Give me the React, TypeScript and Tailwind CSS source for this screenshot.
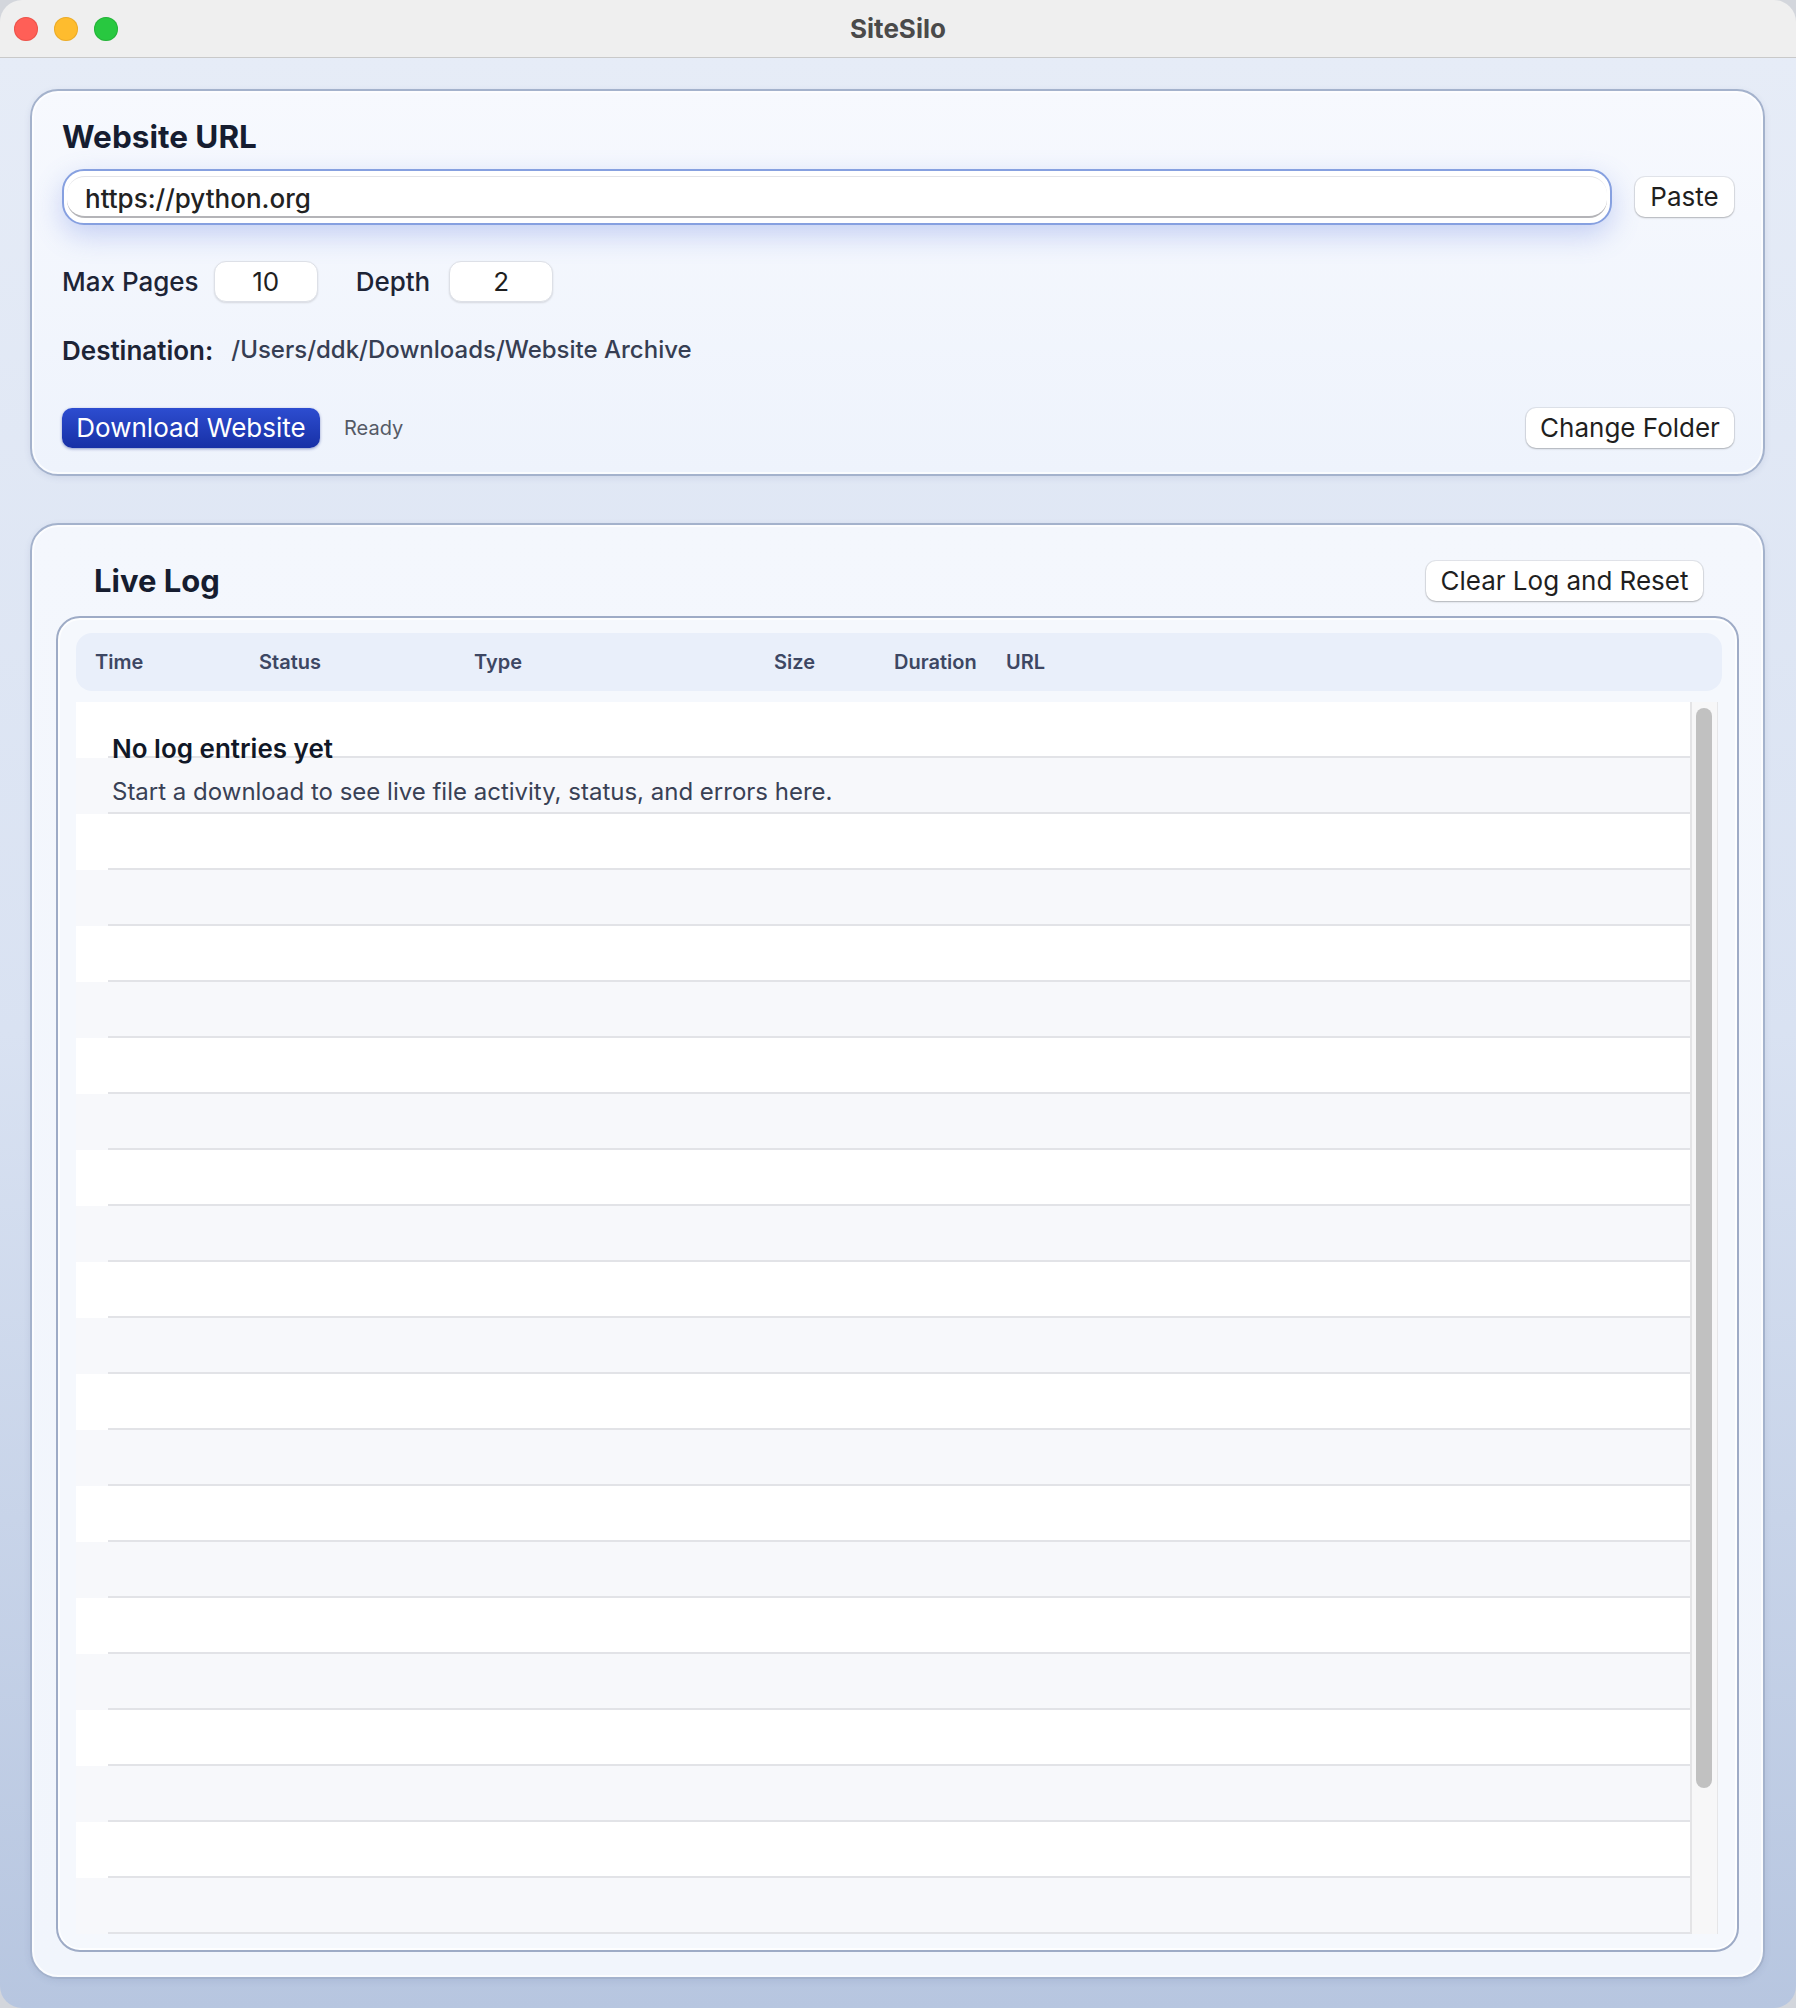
import React from "react";

const font = { fontFamily: "Inter, 'Noto Sans', sans-serif" };

function TrafficLights() {
  return (
    <div className="flex items-center gap-[16px] pl-[14px]">
      <span className="block h-[24px] w-[24px] rounded-full bg-[#ff5f57] shadow-[inset_0_0_0_1px_rgba(200,60,50,0.35)]" />
      <span className="block h-[24px] w-[24px] rounded-full bg-[#febc2e] shadow-[inset_0_0_0_1px_rgba(200,140,30,0.35)]" />
      <span className="block h-[24px] w-[24px] rounded-full bg-[#28c840] shadow-[inset_0_0_0_1px_rgba(30,140,40,0.35)]" />
    </div>
  );
}

function PushButton({ label, width }: { label: string; width: string }) {
  return (
    <button
      className={`${width} h-[40px] shrink-0 rounded-[10px] bg-white text-[26px] leading-[32px] text-[#1f1f1f] shadow-[0_0_0_1px_rgba(0,0,0,0.07),0_1px_2px_rgba(0,0,0,0.22)]`}
    >
      {label}
    </button>
  );
}

function NumberField({ value }: { value: string }) {
  return (
    <div className="flex h-[41px] w-[104px] items-center justify-center rounded-[12px] border border-[#dde0e7] bg-white text-[26px] text-[#1f1f1f] shadow-[0_1px_2px_rgba(0,0,0,0.12)]">
      {value}
    </div>
  );
}

function SettingsPanel() {
  return (
    <section className="flex h-[387px] shrink-0 flex-col rounded-[28px] border-2 border-[#a4b2cc] bg-gradient-to-b from-[#f7f9fe] to-[#eef3fc] pb-[25px] pl-[30px] pr-[29px] pt-[28px] shadow-[inset_0_0_0_2px_rgba(255,255,255,0.7),0_2px_6px_rgba(80,100,150,0.12)]">
      <h2 className="text-[31.5px] font-bold leading-[36px] text-[#161d30]">Website URL</h2>

      <div className="mt-[14px] flex items-center gap-[23px]">
        <div className="h-[56px] flex-1 rounded-[22px] border-2 border-[#86a0e0] bg-white pl-[3px] pr-[3px] pt-[5px] shadow-[0_10px_28px_rgba(95,125,225,0.32)]">
          <div className="flex h-[42px] items-center rounded-[18px] border-b-2 border-t border-b-[#b4b4b8] border-t-[#e4e4e8] pl-[18px] pt-[3px] text-[26px] font-medium text-[#222222]">
            https://python.org
          </div>
        </div>
        <PushButton label="Paste" width="w-[99px]" />
      </div>

      <div className="mt-[36px] flex h-[41px] items-center">
        <span className="text-[26px] font-medium text-[#1d2436]">Max Pages</span>
        <div className="ml-[15px]">
          <NumberField value="10" />
        </div>
        <span className="ml-[38px] text-[26px] font-medium text-[#1d2436]">Depth</span>
        <div className="ml-[19px]">
          <NumberField value="2" />
        </div>
      </div>

      <div className="mt-[32px] flex h-[32px] items-center">
        <span className="text-[26px] font-semibold text-[#1d2436]">Destination:</span>
        <span className="ml-[18px] text-[24px] font-medium text-[#363e53]">
          /Users/ddk/Downloads/Website Archive
        </span>
      </div>

      <div className="mt-[42px] flex h-[40px] items-center">
        <button className="h-[40px] w-[258px] rounded-[10px] bg-gradient-to-b from-[#2d4dd0] to-[#1830a6] text-[26px] leading-[32px] text-white shadow-[0_1px_3px_rgba(20,40,140,0.45)]">
          Download Website
        </button>
        <span className="ml-[24px] text-[20px] text-[#555a66]">Ready</span>
        <div className="flex-1" />
        <PushButton label="Change Folder" width="w-[208px]" />
      </div>
    </section>
  );
}

const columns = ["Time", "Status", "Type", "Size", "Duration", "URL"];
const rows = Array.from({ length: 22 }, (_, i) => i);

function LogTable() {
  return (
    <div className="flex flex-1 flex-col rounded-[24px] border-2 border-[#9eabc6] bg-[#f5f8fd] pl-[18px] pr-[15px] pt-[15px] shadow-[inset_0_0_0_2px_rgba(255,255,255,0.8)]">
      <div className="grid h-[58px] shrink-0 grid-cols-[164px_215px_300px_120px_112px_1fr] items-center rounded-[16px] bg-[#e9effa] pl-[19px] text-[20px] font-semibold text-[#3d4763]">
        {columns.map((c) => (
          <span key={c}>{c}</span>
        ))}
      </div>

      <div className="relative mr-[4px] mt-[11px] flex">
        <div className="flex-1">
          {rows.map((i) => (
            <div key={i} className={`h-[56px] ${i % 2 === 0 ? "bg-white" : "bg-[#f7f8fb]"}`}>
              <div className="ml-[32px] h-full border-b-2 border-[#e2e3e7]" />
            </div>
          ))}
        </div>
        <div className="w-[2px] bg-[#e4e4e6]" />
        <div className="w-[26px] border-r border-[#e6e6e8] bg-[#f7f7f8] pl-[4px] pt-[6px]">
          <div className="h-[1080px] w-[16px] rounded-full bg-[#c1c1c1]" />
        </div>

        <div className="absolute left-[36px] top-[31px]">
          <p className="text-[26px] font-semibold leading-[32px] text-[#111827]">No log entries yet</p>
          <p className="mt-[11px] text-[24px] leading-[32px] text-[#394155]">
            Start a download to see live file activity, status, and errors here.
          </p>
        </div>
      </div>
    </div>
  );
}

function LogPanel() {
  return (
    <section className="flex h-[1456px] shrink-0 flex-col rounded-[28px] border-2 border-[#a4b2cc] bg-gradient-to-b from-[#f4f7fd] to-[#f1f5fc] px-[24px] pb-[25px] pt-[36px] shadow-[inset_0_0_0_2px_rgba(255,255,255,0.7),0_2px_6px_rgba(80,100,150,0.12)]">
      <div className="flex h-[40px] items-center pl-[38px] pr-[36px]">
        <h2 className="text-[31px] font-bold leading-[36px] text-[#161d30]">Live Log</h2>
        <div className="flex-1" />
        <PushButton label="Clear Log and Reset" width="w-[277px]" />
      </div>
      <div className="mt-[15px] flex flex-1 flex-col">
        <LogTable />
      </div>
    </section>
  );
}

export default function App() {
  return (
    <div className="h-[2008px] w-[1796px] overflow-hidden bg-[#d3d6dc]" style={font}>
      <div className="flex h-full flex-col overflow-hidden rounded-[22px]">
        <header className="grid h-[58px] shrink-0 grid-cols-[1fr_auto_1fr] items-center border-b border-[#c9c9c9] bg-[#efefef]">
          <TrafficLights />
          <h1 className="text-[26px] font-bold text-[#4a4a4a]">SiteSilo</h1>
          <div />
        </header>
        <main className="flex flex-1 flex-col gap-[47px] bg-gradient-to-b from-[#e6ecf7] via-[#d9e2f2] to-[#b7c6e0] pl-[30px] pr-[31px] pt-[31px]">
          <SettingsPanel />
          <LogPanel />
        </main>
      </div>
    </div>
  );
}
